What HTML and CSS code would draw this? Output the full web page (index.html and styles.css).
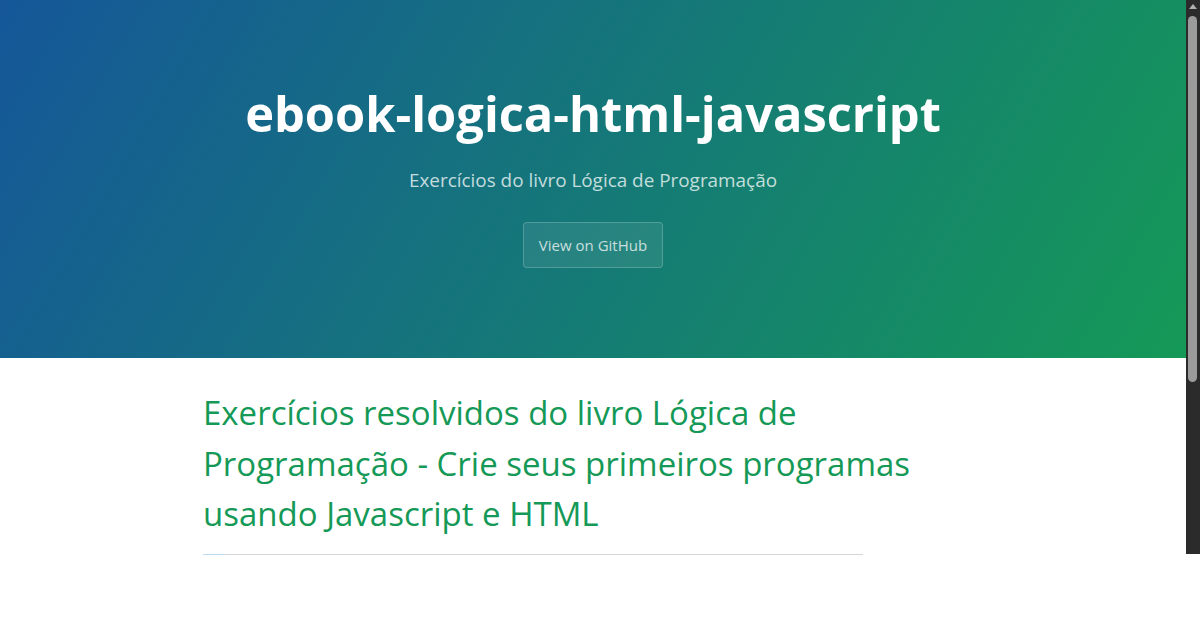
FILE: index.html
```html
<!DOCTYPE html>
<html lang="pt">
<head>
<meta charset="utf-8">
<title>ebook-logica-html-javascript</title>
<link rel="stylesheet" href="styles.css">
</head>
<body>
<div class="frame">
  <div class="page">
    <header class="page-header">
      <h1 class="project-name">ebook-logica-html-javascript</h1>
      <h2 class="project-tagline">Exercícios do livro Lógica de Programação</h2>
      <a class="btn" href="#">View on GitHub</a>
    </header>
    <main class="main-content">
      <h1 class="intro">Exercícios resolvidos do livro Lógica de Programação - Crie seus primeiros programas usando Javascript e HTML</h1>
      <hr class="rule">
    </main>
  </div>
  <div class="scrollbar">
    <div class="arrow"></div>
    <div class="thumb"></div>
  </div>
</div>
</body>
</html>
```
FILE: styles.css
```css
html, body {
  margin: 0;
  padding: 0;
  background: #fff;
}
body {
  font-family: "Open Sans", "Liberation Sans", sans-serif;
  width: 1200px;
  height: 630px;
  overflow: hidden;
}
.frame {
  display: flex;
  align-items: flex-start;
}
.page {
  flex: 1;
  min-width: 0;
}
.page-header {
  height: 358px;
  box-sizing: border-box;
  padding-top: 76px;
  text-align: center;
  color: #fff;
  background-color: #159957;
  background-image: linear-gradient(120deg, #155799, #159957);
}
.project-name {
  margin: 0;
  font-size: 48.8px;
  font-weight: 700;
  line-height: 74px;
}
.project-tagline {
  margin: 17px 0 0;
  font-size: 18.9px;
  font-weight: 400;
  line-height: 26px;
  color: rgba(255, 255, 255, 0.75);
}
.btn {
  display: inline-block;
  margin-top: 29px;
  padding: 12px 15px;
  font-size: 15px;
  line-height: 20px;
  color: rgba(255, 255, 255, 0.75);
  text-decoration: none;
  background-color: rgba(255, 255, 255, 0.08);
  border: 1px solid rgba(255, 255, 255, 0.2);
  border-radius: 4px;
}
.main-content {
  width: 780px;
  margin: 0 auto;
  padding-top: 30px;
}
.intro {
  margin: 0;
  font-size: 33px;
  font-weight: 400;
  line-height: 50.5px;
  color: #159957;
}
.rule {
  width: 660px;
  margin: 14px 0 0;
  height: 1px;
  border: 0;
  background: linear-gradient(to right, #bcdcf2 0, #bcdcf2 22px, #d3d7da 22px);
}
.scrollbar {
  width: 14px;
  height: 554px;
  flex: none;
  background: #2b2b2b;
  position: relative;
}
.arrow {
  position: absolute;
  left: 3px;
  top: 4px;
  width: 0;
  height: 0;
  border-left: 4px solid transparent;
  border-right: 4px solid transparent;
  border-bottom: 5px solid #b0b0b0;
}
.thumb {
  position: absolute;
  left: 2px;
  top: 16px;
  width: 9px;
  height: 366px;
  border-radius: 4.5px;
  background: #9b9b9b;
}
```
